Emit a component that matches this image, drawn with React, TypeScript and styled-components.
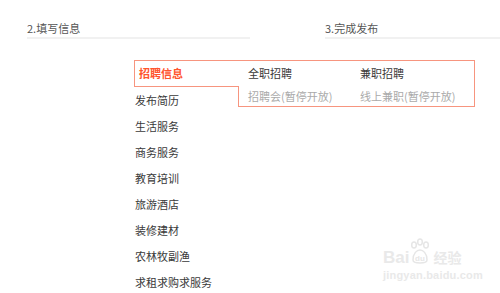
import React from "react";
import styled, { createGlobalStyle } from "styled-components";

const Global = createGlobalStyle`
  html, body { margin: 0; padding: 0; background: #fff; }
  body {
    width: 500px;
    height: 293px;
    overflow: hidden;
    font-family: "Noto Sans CJK SC", "Noto Sans", sans-serif;
  }
`;

const Page = styled.div`
  position: relative;
  width: 500px;
  height: 293px;
  overflow: hidden;
`;

const Steps = styled.div`
  display: flex;
  padding-top: 20px;
  padding-left: 27px;
  gap: 75px;
`;

const Step = styled.div<{ $w: number }>`
  width: ${(p) => p.$w}px;
  font-size: 11px;
  line-height: 16px;
  color: #555;
  padding-bottom: 1px;
  border-bottom: 2px solid #f1f1f1;
`;

const Menu = styled.div`
  position: relative;
  margin-top: 21px;
  margin-left: 134px;
  width: 340px;
`;

const Item = styled.div`
  height: 26px;
  line-height: 26px;
  padding-left: 1px;
  font-size: 11px;
  color: #3a3a3a;
`;

const ActiveTab = styled.div`
  position: relative;
  z-index: 2;
  box-sizing: border-box;
  width: 105px;
  height: 27px;
  line-height: 25px;
  padding-left: 4px;
  border: 1px solid #f7957f;
  border-right: none;
  background: #fff;
  font-size: 11px;
  font-weight: 700;
  color: #ff552e;
`;

const Flyout = styled.div`
  position: absolute;
  z-index: 1;
  left: 104px;
  top: 0;
  box-sizing: border-box;
  width: 237px;
  height: 47px;
  border: 1px solid #f7957f;
  background: #fff;
  padding: 1px 0 0 9px;
  display: grid;
  grid-template-columns: 112px 1fr;
  grid-auto-rows: 23px;
`;

const Sub = styled.div<{ $off?: boolean }>`
  font-size: 11px;
  line-height: 23px;
  color: ${(p) => (p.$off ? "#aaa" : "#3a3a3a")};
  white-space: nowrap;
`;

const Watermark = styled.div`
  position: absolute;
  left: 383px;
  top: 238px;
  width: 90px;
  color: #e9e9e9;
  font-family: "Liberation Sans", Arial, sans-serif;
  pointer-events: none;
`;

const MarkRow = styled.div`
  display: flex;
  align-items: flex-end;
  height: 28px;
  font-size: 17px;
  font-weight: 700;
  line-height: 17px;
`;

const MarkCn = styled.span`
  font-family: "Noto Sans CJK SC", sans-serif;
  font-size: 14px;
  margin-left: 2px;
`;

const MarkUrl = styled.div`
  font-size: 11px;
  font-weight: 700;
  margin-top: 3px;
  letter-spacing: 0.2px;
`;

const Paw = () => (
  <svg width="22" height="28" viewBox="0 0 22 28" style={{ display: "block" }}>
    <g fill="none" stroke="#e6e6e6" strokeWidth="1.5">
      <ellipse cx="5" cy="7" rx="2.3" ry="3" />
      <ellipse cx="11" cy="4" rx="2.3" ry="3" />
      <ellipse cx="17" cy="7" rx="2.3" ry="3" />
      <path d="M4 22 C4 15 8 12 11 12 C14 12 18 15 18 22 C18 26 4 26 4 22 Z" />
    </g>
    <text x="6" y="23" fontSize="8" fontWeight="700" fill="#e6e6e6" fontFamily="Liberation Sans, sans-serif">du</text>
  </svg>
);

const items = [
  "发布简历",
  "生活服务",
  "商务服务",
  "教育培训",
  "旅游酒店",
  "装修建材",
  "农林牧副渔",
  "求租求购求服务",
];

export default function App() {
  return (
    <Page>
      <Global />
      <Steps>
        <Step $w={223}>2.填写信息</Step>
        <Step $w={175}>3.完成发布</Step>
      </Steps>
      <Menu>
        <ActiveTab>招聘信息</ActiveTab>
        <Flyout>
          <Sub>全职招聘</Sub>
          <Sub>兼职招聘</Sub>
          <Sub $off>招聘会(暂停开放)</Sub>
          <Sub $off>线上兼职(暂停开放)</Sub>
        </Flyout>
        {items.map((t) => (
          <Item key={t}>{t}</Item>
        ))}
      </Menu>
      <Watermark>
        <MarkRow>
          <span>Bai</span>
          <Paw />
          <MarkCn>经验</MarkCn>
        </MarkRow>
        <MarkUrl>jingyan.baidu.com</MarkUrl>
      </Watermark>
    </Page>
  );
}
